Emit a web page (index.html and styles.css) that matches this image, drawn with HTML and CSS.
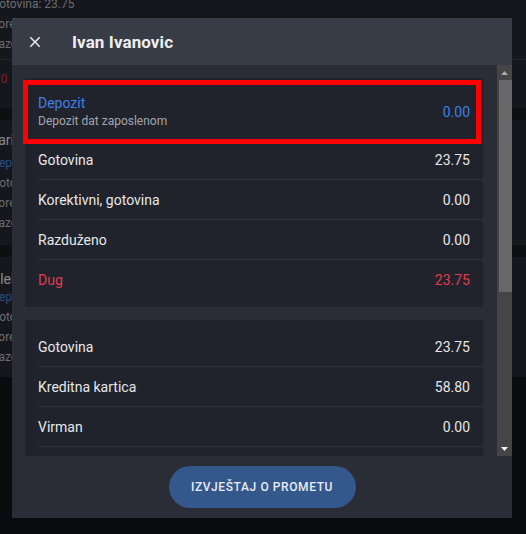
FILE: index.html
```html
<!DOCTYPE html>
<html lang="hr">
<head>
<meta charset="utf-8">
<title>Ivan Ivanovic</title>
<link rel="stylesheet" href="styles.css">
</head>
<body>
<div class="page">
  <section class="bg-card bg-first">
    <div class="bg-line">Gotovina: 23.75</div>
    <div class="bg-line">Korektivni: 0.00</div>
    <div class="bg-line">Razduženo: 0.00</div>
    <div class="bg-sep"></div>
    <div class="bg-line bg-red">10 13.50</div>
  </section>
  <section class="bg-card bg-second">
    <div class="bg-line bg-name">Ilario Marković</div>
    <div class="bg-line bg-blue">Depozit: 0.00</div>
    <div class="bg-line">Gotovina: 12.00</div>
    <div class="bg-line">Korektivni: 0.00</div>
    <div class="bg-line">Razduženo: 0.00</div>
  </section>
  <section class="bg-card bg-third">
    <div class="bg-line bg-name">Aleksandar Petrović</div>
    <div class="bg-line bg-blue">Depozit: 0.00</div>
    <div class="bg-line">Gotovina: 8.40</div>
    <div class="bg-line">Korektivni: 0.00</div>
    <div class="bg-line">Razduženo: 0.00</div>
  </section>
</div>

<div class="modal">
  <header class="modal-head">
    <button class="close" aria-label="Zatvori">
      <svg viewBox="0 0 24 24" width="18" height="18"><path d="M19 6.41L17.59 5 12 10.59 6.41 5 5 6.41 10.59 12 5 17.59 6.41 19 12 13.41 17.59 19 19 17.59 13.41 12z" fill="currentColor"/></svg>
    </button>
    <h1 class="title">Ivan Ivanovic</h1>
  </header>
  <div class="modal-body">
    <div class="scroll-area">
      <div class="card">
        <div class="row row-double">
          <div class="row-text">
            <div class="label blue">Depozit</div>
            <div class="sub">Depozit dat zaposlenom</div>
          </div>
          <div class="value blue">0.00</div>
          <div class="highlight"></div>
        </div>
        <div class="row"><div class="label">Gotovina</div><div class="value">23.75</div></div>
        <div class="row"><div class="label">Korektivni, gotovina</div><div class="value">0.00</div></div>
        <div class="row"><div class="label">Razduženo</div><div class="value">0.00</div></div>
        <div class="row last"><div class="label red">Dug</div><div class="value red">23.75</div></div>
      </div>
      <div class="card">
        <div class="row"><div class="label">Gotovina</div><div class="value">23.75</div></div>
        <div class="row"><div class="label">Kreditna kartica</div><div class="value">58.80</div></div>
        <div class="row"><div class="label">Virman</div><div class="value">0.00</div></div>
        <div class="row"><div class="label">Ček</div><div class="value">0.00</div></div>
        <div class="row"><div class="label">Vaučer</div><div class="value">0.00</div></div>
        <div class="row"><div class="label">Ostalo</div><div class="value">0.00</div></div>
        <div class="row"><div class="label">Popust</div><div class="value">0.00</div></div>
        <div class="row"><div class="label">Storno</div><div class="value">0.00</div></div>
        <div class="row last"><div class="label">Ukupno</div><div class="value">82.55</div></div>
      </div>
    </div>
    <div class="scrollbar" aria-hidden="true">
      <div class="sb-btn"><svg width="7" height="4" viewBox="0 0 7 4"><path d="M3.5 0L7 4H0z" fill="#a9a9a9"/></svg></div>
      <div class="sb-track"><div class="sb-thumb"></div></div>
      <div class="sb-btn"><svg width="7" height="4" viewBox="0 0 7 4"><path d="M0 0H7L3.5 4z" fill="#f2f2f2"/></svg></div>
    </div>
  </div>
  <footer class="modal-foot">
    <button class="report">Izvještaj o prometu</button>
  </footer>
</div>
</body>
</html>
```

FILE: styles.css
```css
* { box-sizing: border-box; }

html, body {
  margin: 0;
  padding: 0;
  height: 100%;
  overflow: hidden;
}

body {
  background: #0a0b0e;
  font-family: Roboto, "Liberation Sans", sans-serif;
}

/* background page (dimmed) */
.page {
  display: flex;
  flex-direction: column;
  gap: 12px;
  background: #0e0f12;
}

.bg-card {
  background: #16171c;
  font-size: 12px;
  color: #6a6c72;
}

.bg-line {
  height: 20px;
  line-height: 20px;
  margin-left: -9px;
  width: 21px;
  overflow: hidden;
  white-space: nowrap;
}

.bg-first {
  margin-top: -6px;
  height: 114px;
}

.bg-first .bg-line:first-child { width: 90px; }

.bg-sep {
  height: 1px;
  background: #23242a;
  margin: 5px 0 0;
}

.bg-red {
  color: #7a2230;
  margin-top: 9px;
  margin-left: -6px;
  word-spacing: 3px;
}

.bg-second {
  height: 125px;
  padding-top: 10px;
}

.bg-third {
  height: 120px;
  padding-top: 12px;
}

.bg-name {
  color: #8a8b90;
  font-size: 14px;
  margin-bottom: 3px;
}

.bg-blue { color: #2c4e86; }

.bg-third .bg-name { margin-bottom: -2px; }

/* modal */
.modal {
  position: fixed;
  left: 12px;
  top: 18px;
  width: 500px;
  height: 500px;
  display: flex;
  flex-direction: column;
  background: #2a2d35;
}

.modal-head {
  height: 47px;
  flex: none;
  display: flex;
  align-items: center;
  background: #383c47;
  padding-left: 14px;
}

.close {
  width: 18px;
  height: 18px;
  padding: 0;
  border: 0;
  background: none;
  color: #e8e8ea;
  display: flex;
}

.title {
  margin: 0 0 0 28px;
  font-size: 17px;
  font-weight: 700;
  color: #eeeef0;
  letter-spacing: 0.1px;
}

.modal-body {
  flex: 1;
  min-height: 0;
  display: flex;
}

.scroll-area {
  flex: 1;
  min-width: 0;
  overflow-y: auto;
  scrollbar-width: none;
  padding: 13px 14px 13px 13px;
  display: flex;
  flex-direction: column;
  gap: 13px;
}

.scrollbar {
  width: 15px;
  flex: none;
  display: flex;
  flex-direction: column;
  background: #454545;
}

.sb-btn {
  height: 15px;
  flex: none;
  display: flex;
  align-items: center;
  justify-content: center;
}

.sb-track {
  flex: 1;
  padding-left: 2px;
}

.sb-thumb {
  height: 212px;
  background: #686868;
}

.card {
  flex: none;
  background: #20232b;
  padding: 7px 0;
}

.row {
  position: relative;
  height: 40px;
  margin-left: 13px;
  padding-right: 13px;
  border-bottom: 1px solid #2e3139;
  display: flex;
  align-items: center;
  justify-content: space-between;
  font-size: 14px;
  color: #e6e7ea;
}

.row.last { border-bottom: 0; }

.row-double { height: 55px; }

.label { line-height: 18px; }

.sub {
  font-size: 12px;
  line-height: 18px;
  color: #a3a5ab;
}

.value { text-align: right; }

.blue { color: #3f7fe6; }
.red { color: #e03a52; }

.highlight {
  position: absolute;
  left: -15px;
  top: -5px;
  width: 458px;
  height: 64px;
  border: 5px solid #ff0000;
  pointer-events: none;
}

.modal-foot {
  height: 62px;
  flex: none;
  display: flex;
  align-items: center;
  justify-content: center;
}

.report {
  height: 42px;
  width: 187px;
  border: 0;
  border-radius: 21px;
  background: #34578c;
  color: #e8ecf4;
  font-family: Roboto, "Liberation Sans", sans-serif;
  font-size: 12px;
  font-weight: 500;
  letter-spacing: 0.6px;
  text-transform: uppercase;
}
```
